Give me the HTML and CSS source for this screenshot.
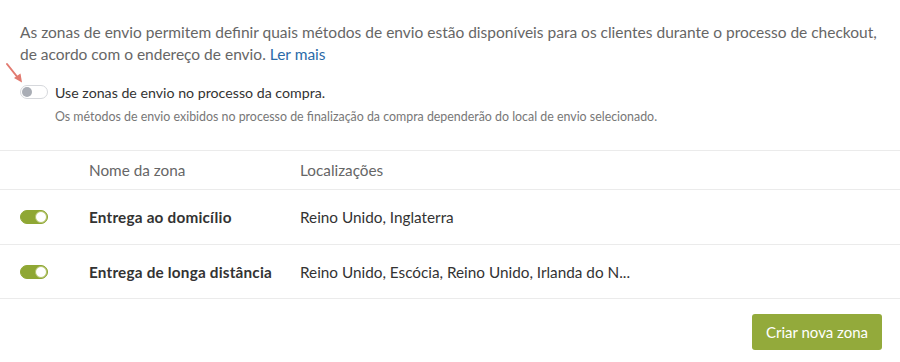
FILE: index.html
```html
<!DOCTYPE html>
<html lang="pt">
<head>
    <meta charset="UTF-8">
    <meta name="viewport" content="width=device-width, initial-scale=1.0">
    <title>Zonas de envio</title>
    <link rel="stylesheet" href="styles.css">
</head>
<body>
    <div class="panel">
        <p class="intro">As zonas de envio permitem definir quais métodos de envio estão disponíveis para os clientes durante o processo de checkout, de acordo com o endereço de envio. <a href="#">Ler mais</a></p>

        <div class="setting">
            <svg class="pointer" width="20" height="22" viewBox="0 0 20 22">
                <path d="M2 2 L13.5 16.5" stroke="#e27a70" stroke-width="2" stroke-linecap="round" fill="none"/>
                <path d="M9 16 L17 20.5 L15.5 11.5 Z" fill="#e27a70"/>
            </svg>
            <div class="setting-row">
                <span class="toggle"></span>
                <span class="setting-label">Use zonas de envio no processo da compra.</span>
            </div>
            <div class="setting-help">Os métodos de envio exibidos no processo de finalização da compra dependerão do local de envio selecionado.</div>
        </div>

        <div class="zones">
            <div class="zone-row zone-head">
                <div class="col-toggle"></div>
                <div class="col-name">Nome da zona</div>
                <div class="col-loc">Localizações</div>
            </div>
            <div class="zone-row">
                <div class="col-toggle"><span class="toggle on"></span></div>
                <div class="col-name">Entrega ao domicílio</div>
                <div class="col-loc">Reino Unido, Inglaterra</div>
            </div>
            <div class="zone-row">
                <div class="col-toggle"><span class="toggle on"></span></div>
                <div class="col-name">Entrega de longa distância</div>
                <div class="col-loc">Reino Unido, Escócia, Reino Unido, Irlanda do N...</div>
            </div>
        </div>

        <div class="actions">
            <button class="btn-create">Criar nova zona</button>
        </div>
    </div>
</body>
</html>
```

FILE: styles.css
```css
body {
    margin: 0;
    background-color: #fff;
    font-family: Lato, "Open Sans", Arial, sans-serif;
    color: #333;
}
.panel {
    width: 900px;
}
.intro {
    margin: 0;
    padding: 21px 20px 0 20px;
    font-size: 15.5px;
    line-height: 22px;
    color: #666;
}
.intro a {
    color: #2b6aa8;
    text-decoration: none;
}
.setting {
    position: relative;
    padding: 17px 20px 0 20px;
}
.pointer {
    position: absolute;
    left: 5px;
    top: -3px;
}
.setting-row {
    display: flex;
    align-items: center;
    gap: 7px;
    height: 20px;
}
.setting-label {
    font-size: 14.2px;
    color: #333;
}
.setting-help {
    padding: 6px 0 0 35px;
    font-size: 12.4px;
    line-height: 18px;
    color: #777;
}
.toggle {
    display: inline-block;
    position: relative;
    width: 26px;
    height: 12px;
    border-radius: 8px;
    border: 1px solid #d6d8dc;
    background-color: #fff;
}
.toggle::after {
    content: "";
    position: absolute;
    left: 1px;
    top: 1px;
    width: 10px;
    height: 10px;
    border-radius: 50%;
    background-color: #a9adb5;
}
.toggle.on {
    background-color: #8fa734;
    border-color: #8fa734;
}
.toggle.on::after {
    left: auto;
    right: 0;
    top: 0;
    width: 10px;
    height: 10px;
    border: 1px solid #b5c56e;
    background-color: #fff;
}
.zones {
    margin-top: 24px;
    border-top: 1px solid #ebebeb;
}
.zone-row {
    display: flex;
    align-items: center;
    height: 54px;
    border-bottom: 1px solid #ebebeb;
    font-size: 15.3px;
}
.zone-row + .zone-row + .zone-row {
    height: 53px;
}
.zone-head {
    height: 38px;
    color: #666;
}
.col-toggle {
    width: 69px;
    padding-left: 20px;
    display: flex;
    align-items: center;
}
.col-name {
    width: 211px;
}
.zone-row .col-name {
    font-weight: bold;
    letter-spacing: 0.2px;
}
.zone-head .col-name {
    font-weight: normal;
    letter-spacing: 0;
}
.col-loc {
    flex: 1;
}
.actions {
    display: flex;
    justify-content: flex-end;
    padding: 15px 18px 0 0;
}
.btn-create {
    height: 36px;
    padding: 0 14px;
    background-color: #93aa3b;
    color: #fff;
    border: none;
    border-radius: 3px;
    font-family: Lato, "Open Sans", Arial, sans-serif;
    font-size: 15px;
    cursor: pointer;
}
.btn-create:hover {
    background-color: #829832;
}
```
